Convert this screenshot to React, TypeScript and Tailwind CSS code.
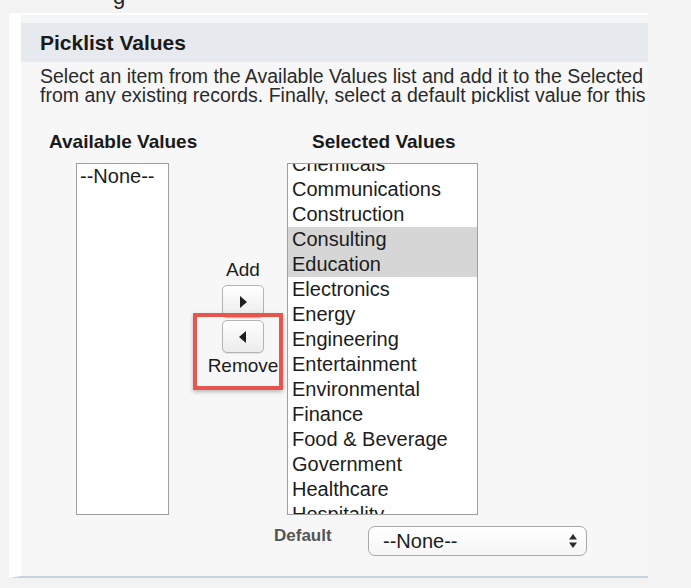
import React from "react";

const selectedValues = [
  "Chemicals",
  "Communications",
  "Construction",
  "Consulting",
  "Education",
  "Electronics",
  "Energy",
  "Engineering",
  "Entertainment",
  "Environmental",
  "Finance",
  "Food & Beverage",
  "Government",
  "Healthcare",
  "Hospitality",
];

const highlighted = ["Consulting", "Education"];

function ArrowButton({ dir }: { dir: "left" | "right" }) {
  return (
    <div className="flex h-[33px] w-[42px] items-center justify-center rounded-[5px] border border-[#b3b3b3] bg-gradient-to-b from-white to-[#ececec] shadow-[0_1px_0_rgba(0,0,0,0.08)]">
      <svg width="8" height="12" viewBox="0 0 8 12">
        {dir === "right" ? (
          <path d="M1 0 L8 6 L1 12 Z" fill="#1f1f1f" />
        ) : (
          <path d="M7 0 L0 6 L7 12 Z" fill="#1f1f1f" />
        )}
      </svg>
    </div>
  );
}

export default function App() {
  return (
    <div className="relative h-[588px] w-[691px] overflow-hidden bg-[#f3f3f3] font-['Liberation_Sans',Arial,sans-serif] text-[#1c1c1c]">
      {/* tail of a heading scrolled off the top */}
      <div className="h-[13px] overflow-hidden">
        <div className="-mt-[14px] pl-[113px] text-[22px] leading-[22px] text-[#222]">g</div>
      </div>

      <div className="ml-[9px] w-[639px] border-b-2 border-l-[12px] border-b-[#c8d2dc] border-l-white bg-[#f7f7f7]">
        <div className="h-[10px] border-t-2 border-white bg-[#f4f5f7]" />
        <div className="flex h-[39px] items-center bg-[#e6e9ee] pl-[19px] text-[21px] font-bold text-[#1a1a1a]">
          Picklist Values
        </div>

        <div className="mt-[5px] overflow-hidden whitespace-nowrap pl-[19px] text-[19.5px] leading-[18.5px] text-[#2a2a2a]">
          <p>Select an item from the Available Values list and add it to the Selected Values list. Remove</p>
          <p>from any existing records. Finally, select a default picklist value for this field.</p>
        </div>

        <div className="mt-[27px] flex text-[19px] font-bold leading-[22px] text-[#1a1a1a]">
          <div className="ml-[28px] w-[263px]">Available Values</div>
          <div>Selected Values</div>
        </div>

        <div className="mt-[10px] flex">
          <div className="ml-[55px] h-[352px] w-[93px] border border-[#9f9f9f] bg-white">
            <div className="h-[25px] pl-[3px] text-[20px] leading-[25px] text-[#1c1c1c]">--None--</div>
          </div>

          <div className="relative ml-[34px] flex w-[80px] flex-col items-center pt-[96px] text-[19px] leading-[22px] text-[#1c1c1c]">
            <div>Add</div>
            <div className="mt-[4px] flex flex-col gap-[2px]">
              <ArrowButton dir="right" />
              <ArrowButton dir="left" />
            </div>
            <div className="mt-[2px]">Remove</div>
            <div className="absolute left-[-10px] top-[150px] h-[77px] w-[90px] border-4 border-[#e8554c] shadow-[0_2px_4px_rgba(0,0,0,0.25)]" />
          </div>

          <div className="ml-[4px] h-[352px] w-[191px] overflow-hidden border border-[#9f9f9f] bg-white">
            <div className="-mt-[12px]">
              {selectedValues.map((item) => (
                <div
                  key={item}
                  className={`h-[25px] pl-[4px] text-[20px] leading-[25px] text-[#1c1c1c] ${
                    highlighted.includes(item) ? "bg-[#d6d6d6]" : ""
                  }`}
                >
                  {item}
                </div>
              ))}
            </div>
          </div>
        </div>

        <div className="mt-[11px] flex items-start pb-[20px]">
          <div className="ml-[253px] w-[94px] text-[17px] font-bold leading-[20px] text-[#555]">Default</div>
          <div className="flex h-[30px] w-[219px] items-center justify-between rounded-[7px] border border-[#a8a8a8] bg-gradient-to-b from-white to-[#f6f6f6] pl-[14px] pr-[9px] text-[20px] text-[#1c1c1c]">
            <span>--None--</span>
            <svg width="8" height="14" viewBox="0 0 8 14">
              <path d="M4 0 L8 5.5 L0 5.5 Z" fill="#2a2a2a" />
              <path d="M4 14 L8 8.5 L0 8.5 Z" fill="#2a2a2a" />
            </svg>
          </div>
        </div>
      </div>
    </div>
  );
}
